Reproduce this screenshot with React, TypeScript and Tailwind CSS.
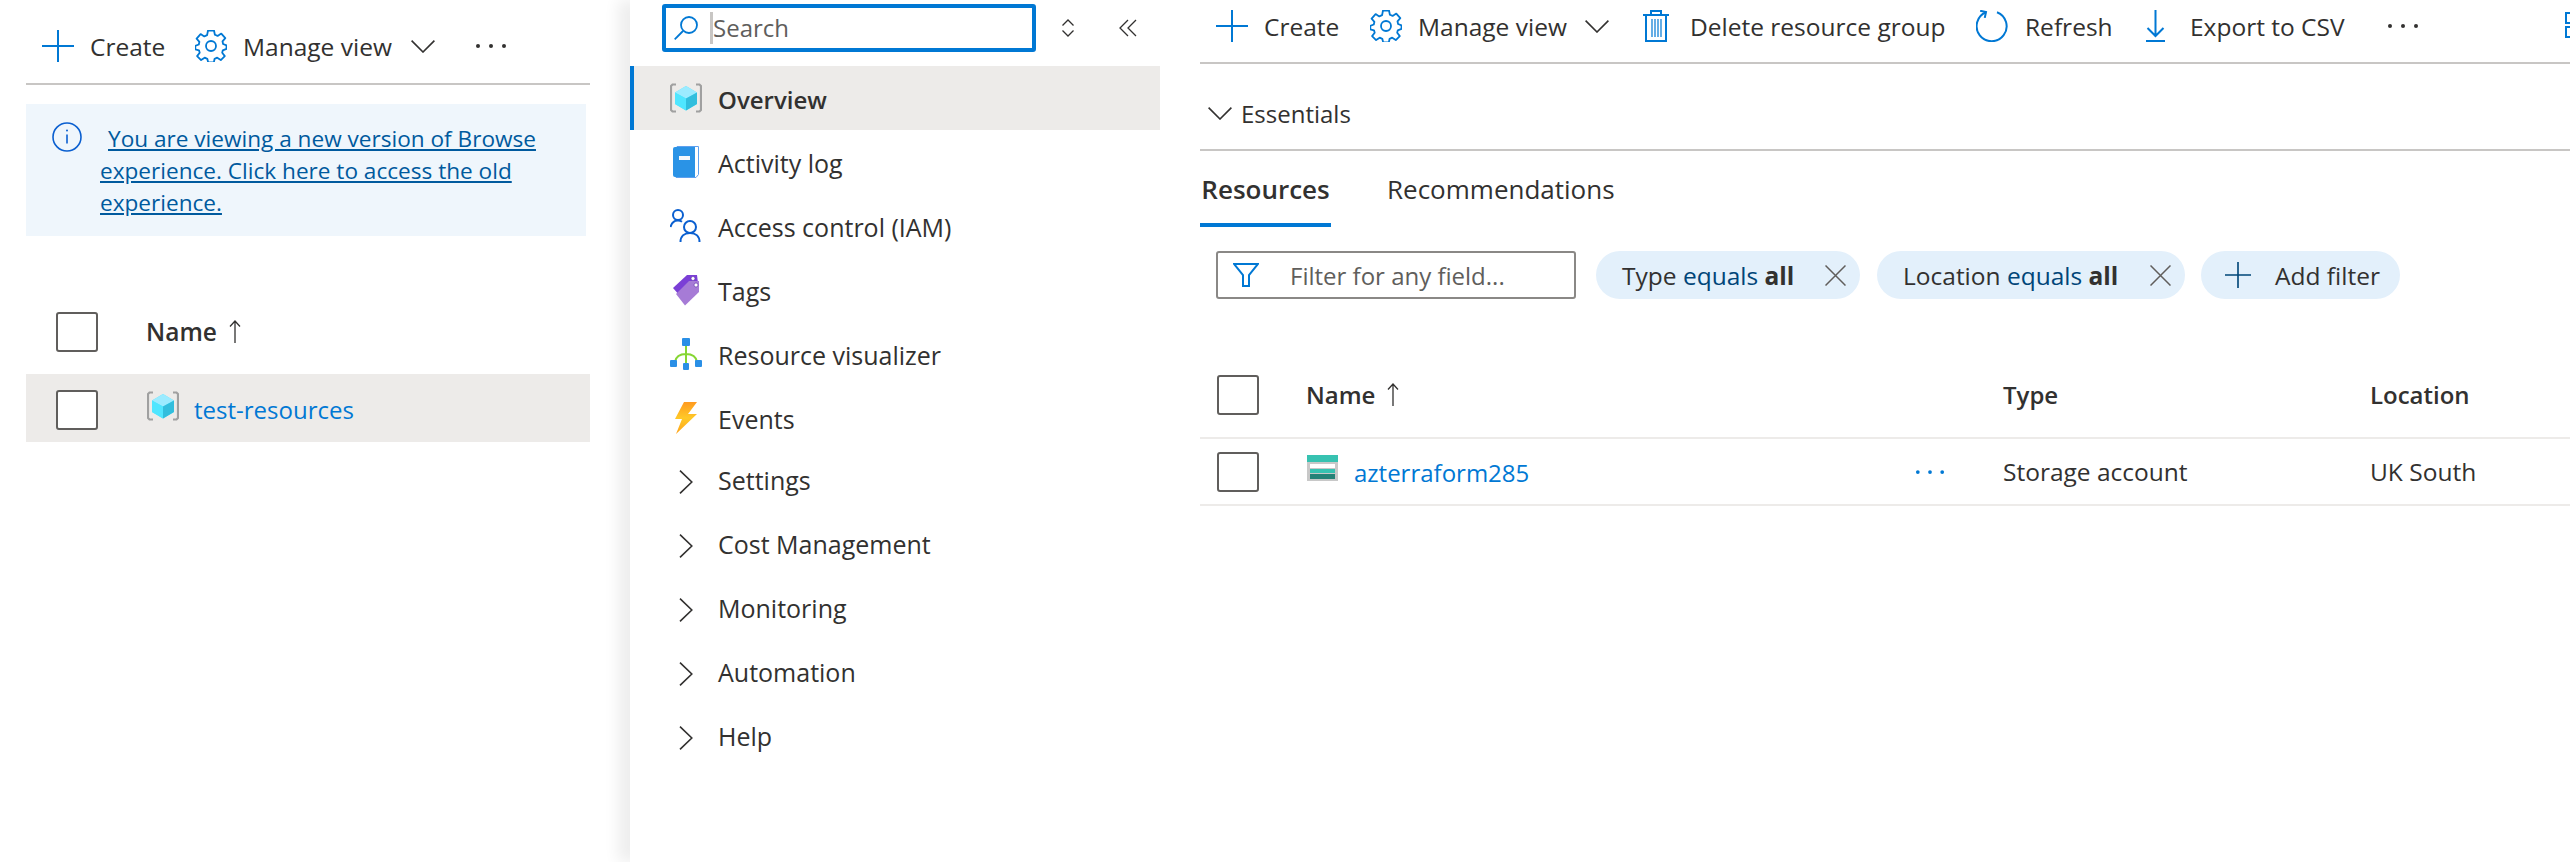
import type { ReactNode } from 'react';

const PlusIcon = ({ color = '#0078d4', size = 32 }: { color?: string; size?: number }) => (
  <svg width={size} height={size} viewBox="0 0 32 32" fill="none" stroke={color} strokeWidth="2">
    <path d="M16 0v32M0 16h32" />
  </svg>
);

const GearIcon = () => (
  <svg width="32" height="32" viewBox="0 0 32 32" fill="none" stroke="#0078d4" strokeWidth="1.8" strokeLinejoin="round">
    <path d="M13 1.500h6l.9 4.200 2.700 1.200 3.700-2.300 4 4.600-2.800 3.200.6 2.600 3.400 1.300v3.600l-3.700 1.400-.6 2.500 2.600 3.300-4 4-3.600-2.400-2.600 1.100-.8 3.700h-5.600l-.9-3.700-2.600-1.100-3.600 2.400-4-4 2.600-3.300-.7-2.500L.3 20.400v-3.600l3.500-1.300.6-2.600L1.600 9.700l4-4.600 3.700 2.300 2.800-1.200z" transform="translate(0 -1)" />
    <circle cx="16" cy="16" r="5" />
  </svg>
);

const ChevronDown = () => (
  <svg width="24" height="13" viewBox="0 0 24 13" fill="none" stroke="#323130" strokeWidth="1.600">
    <path d="M.6.6 12 12 23.400.6" />
  </svg>
);

const ChevronRight = () => (
  <svg width="14" height="24" viewBox="0 0 14 24" fill="none" stroke="#323130" strokeWidth="1.600">
    <path d="M1 .6 12.800 12 1 23.400" />
  </svg>
);

const Dots = ({ color = '#323130', width = 32 }: { color?: string; width?: number }) => (
  <svg width={width} height="6" viewBox="0 0 32 6" fill={color}>
    <circle cx="3" cy="3" r="2" />
    <circle cx="16" cy="3" r="2" />
    <circle cx="29" cy="3" r="2" />
  </svg>
);

const UpArrow = () => (
  <svg width="12" height="24" viewBox="0 0 12 24" fill="none" stroke="#323130" strokeWidth="1.300">
    <path d="M6 1v22M1 6.500 6 1l5 5.500" />
  </svg>
);

const TrashIcon = () => (
  <svg width="26" height="32" viewBox="0 0 26 32" fill="none" stroke="#0078d4" strokeWidth="2">
    <path d="M0 5h26M8 5V1h10v4M3 5v26h20V5" />
    <path d="M9 9v18M12 9v18M15 9v18M18 9v18" strokeWidth="1.200" />
  </svg>
);

const RefreshIcon = () => (
  <svg width="32" height="32" viewBox="0 0 32 32" fill="none" stroke="#0078d4" strokeWidth="2">
    <path d="M21 2.200A15 15 0 1 1 10 2.300" />
    <path d="M10 8V2H4" transform="rotate(12 10 2)" />
  </svg>
);

const ExportIcon = () => (
  <svg width="19" height="32" viewBox="0 0 19 32" fill="none" stroke="#0078d4" strokeWidth="2">
    <path d="M9.500 0v26M1.500 18l8 8 8-8" />
    <path d="M0 31h19" />
  </svg>
);

const ViewIcon = () => (
  <svg width="26" height="26" viewBox="0 0 26 26" fill="none" stroke="#0078d4" strokeWidth="2">
    <path d="M1 1h10v10H1zM1 15h10v10H1zM15 1h10v10H15zM15 15h10v10H15z" />
  </svg>
);

const CubeIcon = () => (
  <svg width="32" height="30" viewBox="0 0 32 30" fill="none">
    <path d="M6 1.500H2.500L1 3v24l1.500 1.500H6M26 1.500h3.500L31 3v24l-1.500 1.500H26" stroke="#a0a0a0" strokeWidth="2.200" />
    <path d="M16 3 27 9.500v11.500L16 27.500 5 21V9.500z" fill="#50e6ff" />
    <path d="M16 3 27 9.500 16 15.500 5 9.500z" fill="#9cebff" />
    <path d="M27 9.500V21L16 27.500v-12z" fill="#32bedd" />
    <path d="M5 9.500l11 6v12L5 21z" fill="#50e6ff" />
  </svg>
);

const BookIcon = () => (
  <svg width="26" height="32" viewBox="0 0 26 32" fill="none">
    <path d="M4 .5h21.500v28L23 31.500H3z" fill="#fff" stroke="#5ea0ef" strokeWidth="1" />
    <path d="M2 1h20v30H2a2 2 0 0 1-2-2V3a2 2 0 0 1 2-2z" fill="#2a93e6" />
    <path d="M6 10h11v4H6z" fill="#f4f8fc" />
  </svg>
);

const PeopleIcon = () => (
  <svg width="32" height="34" viewBox="0 0 32 34" fill="none" stroke="#0a5fd0" strokeWidth="2">
    <circle cx="8" cy="6" r="5" />
    <path d="M.5 18c1-4 4-6.500 7.500-6.500 1.500 0 3 .5 4 1.200" />
    <circle cx="20" cy="18" r="6" />
    <path d="M10.500 33c0-6 4-9 9.500-9s9.500 3 9.500 9" />
  </svg>
);

const TagIcon = () => (
  <svg width="28" height="32" viewBox="0 0 28 32" fill="none">
    <path d="M1 14 15 1h10l1 8L8 22z" fill="#7b3fd6" />
    <path d="M4 20 17 7h10v11L13 31.500z" fill="#a67bd6" />
    <circle cx="21" cy="4.500" r="2" fill="#fff" stroke="#5c2fa8" strokeWidth=".6" />
    <circle cx="24" cy="11" r="2" fill="#fff" stroke="#5c2fa8" strokeWidth=".6" />
  </svg>
);

const VisualizerIcon = () => (
  <svg width="32" height="32" viewBox="0 0 32 32" fill="none">
    <path d="M16 8v18M5 24c1-6 6-8 11-8s10 2 11 8" stroke="#86d633" strokeWidth="2" />
    <rect x="12" y="0" width="8" height="8" rx="1" fill="#2a8fe6" />
    <rect x="0" y="22" width="7" height="7" rx="1" fill="#2a8fe6" />
    <rect x="25" y="22" width="7" height="7" rx="1" fill="#2a8fe6" />
    <rect x="13" y="25" width="6" height="7" rx="1" fill="#2a8fe6" />
  </svg>
);

const BoltIcon = () => (
  <svg width="22" height="32" viewBox="0 0 22 32">
    <defs>
      <linearGradient id="bolt" x1="0" y1="0" x2="0" y2="1">
        <stop offset="0" stopColor="#ff9a1f" />
        <stop offset="0.5" stopColor="#ffc928" />
        <stop offset="1" stopColor="#ffa31a" />
      </linearGradient>
    </defs>
    <path d="M9 0h13l-9 12h9L1 32l6-15H0z" fill="url(#bolt)" />
  </svg>
);

const StorageIcon = () => (
  <svg width="31" height="26" viewBox="0 0 31 26">
    <rect x="0" y="0" width="31" height="26" fill="#c8c8c8" />
    <rect x="0" y="0" width="31" height="7" fill="#37c2b1" />
    <rect x="3" y="9" width="25" height="4" fill="#fff" />
    <rect x="3" y="14" width="25" height="4" fill="#37c2b1" />
    <rect x="3" y="19" width="25" height="5" fill="#258277" />
  </svg>
);

const FunnelIcon = () => (
  <svg width="26" height="24" viewBox="0 0 26 24" fill="none" stroke="#0078d4" strokeWidth="2">
    <path d="M1 1h24L16 12v11h-6V12z" />
  </svg>
);

const CloseIcon = () => (
  <svg width="21" height="21" viewBox="0 0 21 21" fill="none" stroke="#605e5c" strokeWidth="1.500">
    <path d="M.5.5l20 20M20.500.5l-20 20" />
  </svg>
);

const SearchIcon = () => (
  <svg width="24" height="24" viewBox="0 0 24 24" fill="none" stroke="#0078d4" strokeWidth="1.800">
    <circle cx="15" cy="9" r="8" />
    <path d="M9 15 .7 23.300" />
  </svg>
);

const Checkbox = () => <div className="w-[42px] h-10 shrink-0 bg-white rounded-[3px] border-2 border-[#605e5c]" />;

const ToolItem = ({ icon, label, className }: { icon: ReactNode; label: string; className: string }) => (
  <div className={`flex items-center shrink-0 ${className}`}>
    {icon}
    <span className="text-[24.5px] leading-8 text-[#323130] whitespace-nowrap translate-y-[1px]">{label}</span>
  </div>
);

const MenuRow = ({ icon, label, active, group }: { icon: ReactNode; label: string; active?: boolean; group?: boolean }) => (
  <div className={`flex items-center h-16 w-[530px] ${active ? 'bg-[#edebe9] border-l-4 border-[#0078d4] pl-9' : 'pl-10'}`}>
    <div className="w-8 flex justify-center shrink-0">{icon}</div>
    <span className={`ml-4 ${group ? '-translate-y-[1px]' : 'translate-y-[2px]'} ${active ? 'text-[24px] font-semibold' : 'text-[25px]'} text-[#323130]`}>{label}</span>
  </div>
);

const Chip = ({ label, className }: { label: string; className: string }) => (
  <div className={`flex items-center h-12 rounded-full bg-[#e3f0fb] pl-[26px] text-[24.5px] text-[#323130] ${className}`}>
    <span className="whitespace-nowrap translate-y-[1px]">
      {label} <span className="text-[#004578]">equals</span> <span className="font-bold">all</span>
    </span>
    <div className="ml-auto mr-[14px] flex">
      <CloseIcon />
    </div>
  </div>
);

function LeftPanel() {
  return (
    <div className="w-[630px] shrink-0 pl-[26px]">
      <div className="w-[564px] h-[85px] pt-[30px] border-b-2 border-[#c8c6c4] flex items-start">
        <div className="ml-4 flex items-center h-8">
          <ToolItem className="w-[153px]" icon={<span className="mr-4 flex"><PlusIcon /></span>} label="Create" />
          <ToolItem className="w-[216px]" icon={<span className="mr-4 flex"><GearIcon /></span>} label="Manage view" />
          <ChevronDown />
          <div className="ml-10 flex"><Dots /></div>
        </div>
      </div>
      <div className="mt-[19px] w-[560px] h-[132px] bg-[#eff6fc] flex pl-[26px] pt-[18px]">
        <svg width="30" height="30" viewBox="0 0 30 30" fill="none" stroke="#0a5fd0" strokeWidth="1.600" className="shrink-0">
          <circle cx="15" cy="15" r="14" />
          <path d="M15 12.500v9" />
          <circle cx="15" cy="8.500" r="1" fill="#0a5fd0" stroke="none" />
        </svg>
        <a className="ml-[18px] mt-px text-[22.600px] leading-8 text-[#005a9e] underline whitespace-nowrap">
          <span className="ml-2">You are viewing a new version of Browse</span>
          <br />
          experience. Click here to access the old
          <br />
          experience.
        </a>
      </div>
      <div className="mt-[54px] w-[564px] h-[84px] flex items-center pl-[30px]">
        <Checkbox />
        <span className="ml-12 text-[24.5px] font-semibold text-[#323130]">Name</span>
        <span className="ml-3 flex"><UpArrow /></span>
      </div>
      <div className="w-[564px] h-[68px] bg-[#edebe9] flex items-center pl-[30px] pt-1">
        <Checkbox />
        <div className="ml-[49px] -mt-1 flex -translate-y-[2px]">
          <CubeIcon />
        </div>
        <a className="ml-[15px] text-[24px] text-[#0078d4]">test-resources</a>
      </div>
    </div>
  );
}

function MiddlePanel() {
  return (
    <div className="w-[530px] h-[862px] shrink-0 bg-white z-10 shadow-[-12px_0_14px_rgba(0,0,0,0.07)]">
      <div className="h-[66px] pt-1 flex items-start pl-8">
        <div className="w-[374px] h-12 border-[4px] border-[#0078d4] rounded-[3px] flex items-center pl-2">
          <SearchIcon />
          <span className="ml-3 text-[24px] text-[#605e5c] border-l-[3px] border-[#c8c6c4] leading-[32px]">Search</span>
        </div>
        <svg width="14" height="18" viewBox="0 0 14 18" fill="none" stroke="#323130" strokeWidth="1.300" className="ml-[25px] mt-[15px]">
          <path d="M1.500 6.500 7 1l5.500 5.500M1.500 11.500 7 17l5.500-5.500" />
        </svg>
        <svg width="18" height="18" viewBox="0 0 18 18" fill="none" stroke="#323130" strokeWidth="1.300" className="ml-[44px] mt-[15px]">
          <path d="M9 1 1 9l8 8M17 1 9 9l8 8" />
        </svg>
      </div>
      <MenuRow active icon={<CubeIcon />} label="Overview" />
      <MenuRow icon={<BookIcon />} label="Activity log" />
      <MenuRow icon={<PeopleIcon />} label="Access control (IAM)" />
      <MenuRow icon={<TagIcon />} label="Tags" />
      <MenuRow icon={<VisualizerIcon />} label="Resource visualizer" />
      <MenuRow icon={<BoltIcon />} label="Events" />
      <MenuRow group icon={<ChevronRight />} label="Settings" />
      <MenuRow group icon={<ChevronRight />} label="Cost Management" />
      <MenuRow group icon={<ChevronRight />} label="Monitoring" />
      <MenuRow group icon={<ChevronRight />} label="Automation" />
      <MenuRow group icon={<ChevronRight />} label="Help" />
    </div>
  );
}

function RightPanel() {
  return (
    <div className="flex-1 min-w-0 pl-10 overflow-hidden">
      <div className="h-16 border-b-2 border-[#c8c6c4] flex items-start pl-4 pt-[10px]">
        <ToolItem className="w-[154px]" icon={<span className="mr-4 flex"><PlusIcon /></span>} label="Create" />
        <ToolItem className="w-[215px]" icon={<span className="mr-4 flex"><GearIcon /></span>} label="Manage view" />
        <div className="mt-[10px] flex"><ChevronDown /></div>
        <ToolItem className="ml-[34px] w-[333px]" icon={<span className="mr-[21px] flex"><TrashIcon /></span>} label="Delete resource group" />
        <ToolItem className="w-[170px]" icon={<span className="mr-[17px] flex"><RefreshIcon /></span>} label="Refresh" />
        <ToolItem className="w-[241px]" icon={<span className="mr-[25px] flex"><ExportIcon /></span>} label="Export to CSV" />
        <div className="mt-[13px] flex"><Dots /></div>
        <div className="ml-[146px] mt-[2px] flex shrink-0"><ViewIcon /></div>
      </div>
      <div className="h-[87px] border-b-2 border-[#c8c6c4] flex items-center pl-2 pt-[14px]">
        <ChevronDown />
        <span className="ml-[9px] text-[24px] text-[#323130]">Essentials</span>
      </div>
      <div className="h-[76px] flex items-start pt-[22px]">
        <div className="w-[131px] h-[54px] border-b-4 border-[#0078d4] text-[26px] font-semibold text-[#323130] leading-8 text-center whitespace-nowrap">Resources</div>
        <div className="ml-14 text-[26px] leading-8 text-[#323130]">Recommendations</div>
      </div>
      <div className="mt-6 flex items-center pl-4 h-12">
        <div className="w-[360px] h-12 border-2 border-[#8a8886] rounded-[3px] flex items-center pl-[15px]">
          <FunnelIcon />
          <span className="ml-[31px] text-[24px] text-[#605e5c] translate-y-[1px]">Filter for any field...</span>
        </div>
        <Chip className="ml-5 w-[264px]" label="Type" />
        <Chip className="ml-[17px] w-[308px]" label="Location" />
        <div className="ml-4 w-[199px] h-12 rounded-full bg-[#e3f0fb] flex items-center pl-6">
          <PlusIcon color="#004578" size={26} />
          <span className="ml-6 text-[24.5px] text-[#323130] whitespace-nowrap translate-y-[1px]">Add filter</span>
        </div>
      </div>
      <div className="mt-[54px] h-[86px] border-b-2 border-[#edebe9] flex items-center text-[24px] text-[#323130] font-semibold">
        <div className="w-[106px] pl-[17px]"><Checkbox /></div>
        <div className="w-[697px] flex items-center">
          Name
          <span className="ml-3 flex"><UpArrow /></span>
        </div>
        <div className="w-[367px]">Type</div>
        <div>Location</div>
      </div>
      <div className="h-[67px] border-b-2 border-[#edebe9] flex items-center text-[24.5px] text-[#323130]">
        <div className="w-[106px] pl-[17px]"><Checkbox /></div>
        <div className="w-[697px] flex items-center pr-[58px]">
          <div className="-translate-y-[4px] flex ml-px"><StorageIcon /></div>
          <a className="ml-4 text-[24px] text-[#0078d4] translate-y-[1px]">azterraform285</a>
          <div className="ml-auto flex"><Dots color="#0078d4" width={30} /></div>
        </div>
        <div className="w-[367px] translate-y-[1px]">Storage account</div>
        <div className="translate-y-[1px]">UK South</div>
      </div>
    </div>
  );
}

export default function App() {
  return (
    <div className="flex w-[2570px] h-[862px] overflow-hidden bg-white font-['Open_Sans',sans-serif]">
      <LeftPanel />
      <MiddlePanel />
      <RightPanel />
    </div>
  );
}
